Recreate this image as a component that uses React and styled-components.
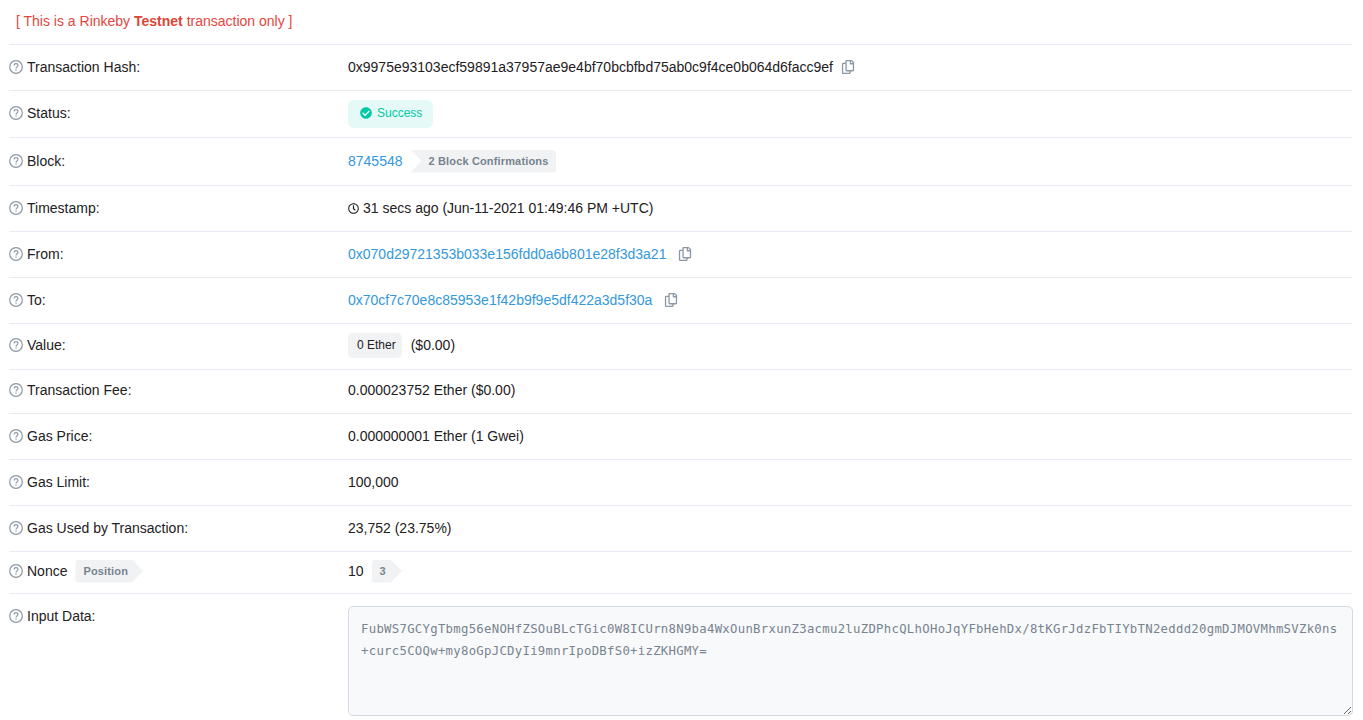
import React from 'react';
import styled, { createGlobalStyle } from 'styled-components';
import { FaCheckCircle, FaRegClock, FaRegCopy } from 'react-icons/fa';

const GlobalStyle = createGlobalStyle`
  html, body {
    margin: 0;
    background: #fff;
  }
  body {
    font-family: "Liberation Sans", Arial, sans-serif;
    font-size: 14px;
    color: #1e2022;
  }
`;

const Page = styled.div`
  width: 1343px;
  padding: 0 11px 0 9px;
  height: 720px;
  overflow: hidden;
`;

const Notice = styled.div`
  box-sizing: border-box;
  height: 45px;
  padding: 0 0 3px 7px;
  display: flex;
  align-items: center;
  color: #e6463d;
  border-bottom: 1px solid #e7eaf3;
  white-space: pre;
  b {
    color: #de4437;
  }
`;

const Row = styled.div`
  box-sizing: border-box;
  display: grid;
  grid-template-columns: 339px 1fr;
  align-items: ${p => (p.$top ? 'start' : 'center')};
  height: ${p => p.$h}px;
  border-bottom: ${p => (p.$last ? 'none' : '1px solid #e7eaf3')};
  padding: ${p => (p.$top ? '12px 0 0' : `0 0 ${p.$lift ?? 1}px`)};
`;

const Label = styled.div`
  display: flex;
  align-items: center;
  gap: 4px;
  padding-top: ${p => (p.$top ? '2px' : '0')};
`;

const Value = styled.div`
  display: flex;
  align-items: center;
`;

const Link = styled.a`
  color: #3498db;
  text-decoration: none;
`;

const Copy = styled(FaRegCopy)`
  color: #8c98a4;
  font-size: 14px;
  margin-left: ${p => p.$gap}px;
`;

const Status = styled.span`
  box-sizing: border-box;
  display: inline-flex;
  align-items: center;
  gap: 5px;
  height: 28px;
  margin-top: 2px;
  padding: 0 11px 2px 12px;
  border-radius: 6px;
  background: rgba(0, 201, 167, 0.1);
  color: #00c9a7;
  font-size: 12px;
`;

const Arrow = styled.span`
  display: inline-flex;
  align-items: center;
  height: 23px;
  background: #f1f2f4;
  color: #77838f;
  font-size: 11px;
  font-weight: bold;
  letter-spacing: 0.15px;
`;

const BlockBadge = styled(Arrow)`
  margin-left: 8px;
  padding: 0 8px 0 18px;
  border-radius: 0 3px 3px 0;
  clip-path: polygon(0 0, 100% 0, 100% 100%, 0 100%, 11px 50%);
`;

const PositionBadge = styled(Arrow)`
  margin-left: ${p => p.$gap}px;
  padding: 0 ${p => p.$right}px 0 8px;
  border-radius: 3px 0 0 3px;
  clip-path: polygon(0 0, calc(100% - 11px) 0, 100% 50%, calc(100% - 11px) 100%, 0 100%);
`;

const Pill = styled.span`
  display: inline-flex;
  align-items: center;
  height: 25px;
  padding: 0 6px 0 9px;
  border-radius: 5px;
  background: #f1f2f4;
  font-size: 12px;
  margin-right: 9px;
`;

const InputBox = styled.textarea`
  display: block;
  box-sizing: border-box;
  width: 1005px;
  height: 110px;
  margin: 0;
  padding: 11px 12px;
  background: #f8f9fa;
  border: 1px solid #d5dae2;
  border-radius: 5px;
  color: #77838f;
  font-family: "DejaVu Sans Mono", monospace;
  font-size: 12.3px;
  letter-spacing: 0.285px;
  line-height: 22px;
  word-break: break-word;
  outline: none;
`;

const QuestionIcon = () => (
  <svg width="14" height="14" viewBox="0 0 14 14" fill="none" stroke="#8c98a4" strokeWidth="1.2">
    <circle cx="7" cy="7" r="6.3" />
    <path d="M5 5.5C5.1 4.3 6 3.6 7 3.6c1.2 0 2 .8 2 1.7C9 6.9 7 6.9 7 8.6" />
    <path d="M7 9.6v1.1" />
  </svg>
);

const Field = ({ label, h, lift, top, last, extra, children }) => (
  <Row $h={h} $lift={lift} $top={top} $last={last}>
    <Label $top={top}>
      <QuestionIcon />
      {label}
      {extra}
    </Label>
    <Value>{children}</Value>
  </Row>
);

const inputData =
  'FubWS7GCYgTbmg56eNOHfZSOuBLcTGic0W8ICUrn8N9ba4WxOunBrxunZ3acmu2luZDPhcQLhOHoJqYFbHehDx/8tKGrJdzFbTIYbTN2eddd20gmDJMOVMhmSVZk0ns+curc5COQw+my8oGpJCDyIi9mnrIpoDBfS0+izZKHGMY=';

const App = () => (
  <Page>
    <GlobalStyle />
    <Notice>
      [ This is a Rinkeby <b>Testnet</b> transaction only ]
    </Notice>
    <Field label="Transaction Hash:" h={46}>
      0x9975e93103ecf59891a37957ae9e4bf70bcbfbd75ab0c9f4ce0b064d6facc9ef
      <Copy $gap={8} />
    </Field>
    <Field label="Status:" h={47} lift={3}>
      <Status>
        <FaCheckCircle size={12} />
        Success
      </Status>
    </Field>
    <Field label="Block:" h={48}>
      <Link>8745548</Link>
      <BlockBadge>2 Block Confirmations</BlockBadge>
    </Field>
    <Field label="Timestamp:" h={46}>
      <FaRegClock size={11} style={{ marginRight: 4 }} />
      31 secs ago (Jun-11-2021 01:49:46 PM +UTC)
    </Field>
    <Field label="From:" h={46}>
      <Link>0x070d29721353b033e156fdd0a6b801e28f3d3a21</Link>
      <Copy $gap={12} />
    </Field>
    <Field label="To:" h={46}>
      <Link>0x70cf7c70e8c85953e1f42b9f9e5df422a3d5f30a</Link>
      <Copy $gap={12} />
    </Field>
    <Field label="Value:" h={46} lift={3}>
      <Pill>0 Ether</Pill>
      ($0.00)
    </Field>
    <Field label="Transaction Fee:" h={44} lift={3}>
      0.000023752 Ether ($0.00)
    </Field>
    <Field label="Gas Price:" h={46}>
      0.000000001 Ether (1 Gwei)
    </Field>
    <Field label="Gas Limit:" h={46}>
      100,000
    </Field>
    <Field label="Gas Used by Transaction:" h={46}>
      23,752 (23.75%)
    </Field>
    <Field
      label="Nonce"
      h={42}
      lift={3}
      extra={<PositionBadge $gap={4} $right={15}>Position</PositionBadge>}
    >
      10
      <PositionBadge $gap={8} $right={16}>3</PositionBadge>
    </Field>
    <Field label="Input Data:" h={127} top last>
      <InputBox readOnly value={inputData} spellCheck={false} />
    </Field>
  </Page>
);

export default App;
